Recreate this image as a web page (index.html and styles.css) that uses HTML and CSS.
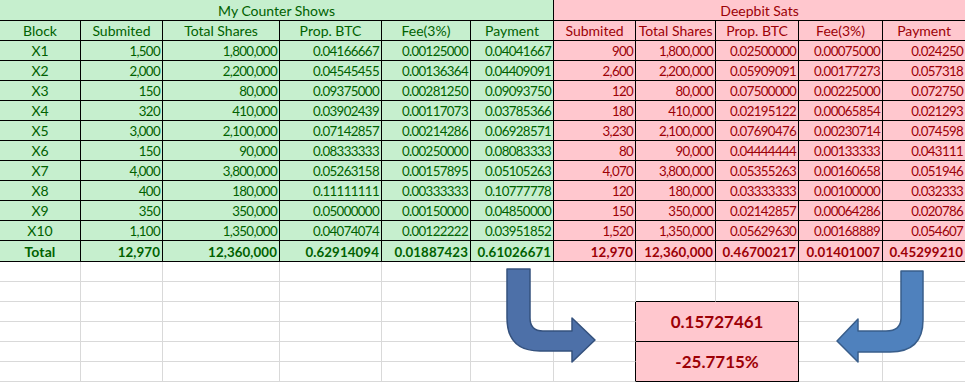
FILE: index.html
```html
<!DOCTYPE html>
<html>
<head>
<meta charset="utf-8">
<link rel="stylesheet" href="styles.css">
</head>
<body>
<div class="sheet">
<table class="grid">
<colgroup>
<col class="w81"><col class="w82"><col class="w117"><col class="w102"><col class="w89"><col class="w83"><col class="w82"><col class="w80"><col class="w83"><col class="w84"><col class="w83">
</colgroup>
<tr class="row-title">
<td colspan="6" class="g c">My Counter Shows</td>
<td colspan="5" class="p c">Deepbit Sats</td>
</tr>
<tr>
<td class="g c">Block</td><td class="g c">Submited</td><td class="g c">Total Shares</td><td class="g c">Prop. BTC</td><td class="g c">Fee(3%)</td><td class="g c">Payment</td>
<td class="p c">Submited</td><td class="p c">Total Shares</td><td class="p c">Prop. BTC</td><td class="p c">Fee(3%)</td><td class="p c">Payment</td>
</tr>
<tr><td class="g c">X1</td><td class="g r">1,500</td><td class="g r">1,800,000</td><td class="g r">0.04166667</td><td class="g r">0.00125000</td><td class="g r">0.04041667</td><td class="p r">900</td><td class="p r">1,800,000</td><td class="p r">0.02500000</td><td class="p r">0.00075000</td><td class="p r">0.024250</td></tr>
<tr><td class="g c">X2</td><td class="g r">2,000</td><td class="g r">2,200,000</td><td class="g r">0.04545455</td><td class="g r">0.00136364</td><td class="g r">0.04409091</td><td class="p r">2,600</td><td class="p r">2,200,000</td><td class="p r">0.05909091</td><td class="p r">0.00177273</td><td class="p r">0.057318</td></tr>
<tr><td class="g c">X3</td><td class="g r">150</td><td class="g r">80,000</td><td class="g r">0.09375000</td><td class="g r">0.00281250</td><td class="g r">0.09093750</td><td class="p r">120</td><td class="p r">80,000</td><td class="p r">0.07500000</td><td class="p r">0.00225000</td><td class="p r">0.072750</td></tr>
<tr><td class="g c">X4</td><td class="g r">320</td><td class="g r">410,000</td><td class="g r">0.03902439</td><td class="g r">0.00117073</td><td class="g r">0.03785366</td><td class="p r">180</td><td class="p r">410,000</td><td class="p r">0.02195122</td><td class="p r">0.00065854</td><td class="p r">0.021293</td></tr>
<tr><td class="g c">X5</td><td class="g r">3,000</td><td class="g r">2,100,000</td><td class="g r">0.07142857</td><td class="g r">0.00214286</td><td class="g r">0.06928571</td><td class="p r">3,230</td><td class="p r">2,100,000</td><td class="p r">0.07690476</td><td class="p r">0.00230714</td><td class="p r">0.074598</td></tr>
<tr><td class="g c">X6</td><td class="g r">150</td><td class="g r">90,000</td><td class="g r">0.08333333</td><td class="g r">0.00250000</td><td class="g r">0.08083333</td><td class="p r">80</td><td class="p r">90,000</td><td class="p r">0.04444444</td><td class="p r">0.00133333</td><td class="p r">0.043111</td></tr>
<tr><td class="g c">X7</td><td class="g r">4,000</td><td class="g r">3,800,000</td><td class="g r">0.05263158</td><td class="g r">0.00157895</td><td class="g r">0.05105263</td><td class="p r">4,070</td><td class="p r">3,800,000</td><td class="p r">0.05355263</td><td class="p r">0.00160658</td><td class="p r">0.051946</td></tr>
<tr><td class="g c">X8</td><td class="g r">400</td><td class="g r">180,000</td><td class="g r">0.11111111</td><td class="g r">0.00333333</td><td class="g r">0.10777778</td><td class="p r">120</td><td class="p r">180,000</td><td class="p r">0.03333333</td><td class="p r">0.00100000</td><td class="p r">0.032333</td></tr>
<tr><td class="g c">X9</td><td class="g r">350</td><td class="g r">350,000</td><td class="g r">0.05000000</td><td class="g r">0.00150000</td><td class="g r">0.04850000</td><td class="p r">150</td><td class="p r">350,000</td><td class="p r">0.02142857</td><td class="p r">0.00064286</td><td class="p r">0.020786</td></tr>
<tr><td class="g c">X10</td><td class="g r">1,100</td><td class="g r">1,350,000</td><td class="g r">0.04074074</td><td class="g r">0.00122222</td><td class="g r">0.03951852</td><td class="p r">1,520</td><td class="p r">1,350,000</td><td class="p r">0.05629630</td><td class="p r">0.00168889</td><td class="p r">0.054607</td></tr>
<tr class="row-total"><td class="g c b">Total</td><td class="g r b">12,970</td><td class="g r b">12,360,000</td><td class="g r b">0.62914094</td><td class="g r b">0.01887423</td><td class="g r b">0.61026671</td><td class="p r b">12,970</td><td class="p r b">12,360,000</td><td class="p r b">0.46700217</td><td class="p r b">0.01401007</td><td class="p r b">0.45299210</td></tr>
<tr><td class="e"></td><td class="e"></td><td class="e"></td><td class="e"></td><td class="e"></td><td class="e"></td><td class="e"></td><td class="e"></td><td class="e"></td><td class="e"></td><td class="e"></td></tr>
<tr><td class="e"></td><td class="e"></td><td class="e"></td><td class="e"></td><td class="e"></td><td class="e"></td><td class="e"></td><td class="e kb"></td><td class="e kb"></td><td class="e"></td><td class="e"></td></tr>
<tr><td class="e"></td><td class="e"></td><td class="e"></td><td class="e"></td><td class="e"></td><td class="e"></td><td class="e kr"></td><td class="box" colspan="2" rowspan="2">0.15727461</td><td class="e"></td><td class="e"></td></tr>
<tr><td class="e"></td><td class="e"></td><td class="e"></td><td class="e"></td><td class="e"></td><td class="e"></td><td class="e kr"></td><td class="e"></td><td class="e"></td></tr>
<tr><td class="e"></td><td class="e"></td><td class="e"></td><td class="e"></td><td class="e"></td><td class="e"></td><td class="e kr"></td><td class="box" colspan="2" rowspan="2">-25.7715%</td><td class="e"></td><td class="e"></td></tr>
<tr><td class="e"></td><td class="e"></td><td class="e"></td><td class="e"></td><td class="e"></td><td class="e"></td><td class="e kr"></td><td class="e"></td><td class="e"></td></tr>
</table>
<svg class="arrows" viewBox="0 0 965 382" width="965" height="382">
<path class="arrow-l" d="M507,269 L530,269 L530,318 Q530,331 543,331 L572,331 L572,318 L595,340 L572,362 L572,351 L540,351 Q507,351 507,318 Z"/>
<path class="arrow-r" d="M901,271 L923,271 L923,320 Q923,352 890,352 L858,352 L858,362 L837,341 L858,319 L858,331 L886,331 Q901,331 901,318 Z"/>
</svg>
</div>
</body>
</html>
```
FILE: styles.css
```css
html, body {
  margin: 0;
  padding: 0;
  background: #fff;
}
.sheet {
  position: relative;
  width: 965px;
  height: 382px;
  overflow: hidden;
}
.grid {
  table-layout: fixed;
  width: 966px;
  border-collapse: separate;
  border-spacing: 0;
  font-family: "Lato", "Liberation Sans", sans-serif;
  font-size: 13.3px;
  letter-spacing: -0.65px;
}
.w81 { width: 81px; }
.w82 { width: 82px; }
.w117 { width: 117px; }
.w102 { width: 102px; }
.w89 { width: 89px; }
.w83 { width: 83px; }
.w80 { width: 80px; }
.w84 { width: 84px; }
.grid tr { height: 20px; }
.grid tr.row-title, .grid tr.row-total { height: 21px; }
.grid td {
  box-sizing: border-box;
  padding: 0 2px 0 2px;
  line-height: 18px;
  vertical-align: bottom;
  white-space: nowrap;
  overflow: hidden;
  border-right: 1px solid #000;
  border-bottom: 1px solid #000;
}
.grid td.c {
  font-size: 14px;
  letter-spacing: 0;
}
.g { background: #c6efce; color: #006100; }
.p { background: #ffc7ce; color: #9c0006; }
.c { text-align: center; }
.r { text-align: right; }
.grid td.b { font-weight: 700; letter-spacing: 0.1px; }
.grid td.e {
  border-right-color: #d9d9d9;
  border-bottom-color: #d9d9d9;
}
.grid td.kb { border-bottom-color: #000; }
.grid td.kr { border-right-color: #000; }
.grid td.box {
  background: #ffc7ce;
  color: #9c0006;
  font-weight: 700;
  font-size: 17px;
  letter-spacing: 0;
  text-align: center;
  vertical-align: middle;
  line-height: 20px;
}
.arrows {
  position: absolute;
  left: 0;
  top: 0;
  pointer-events: none;
}
.arrow-l { fill: #4d70a8; stroke: #34517d; stroke-width: 1.5; stroke-linejoin: round; }
.arrow-r { fill: #4f81bd; stroke: #385d8a; stroke-width: 1.5; stroke-linejoin: round; }
```
